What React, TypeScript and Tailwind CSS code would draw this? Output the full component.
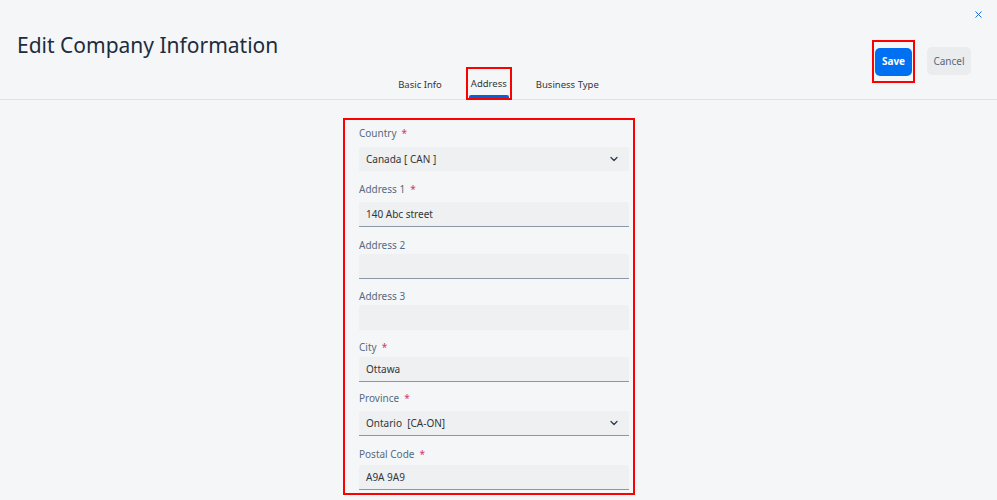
import { ChevronDown, X } from "lucide-react";

interface FieldProps {
    label: string;
    value?: string;
    required?: boolean;
    select?: boolean;
    underline?: boolean;
    labelClass: string;
    inputClass: string;
}

function Field({ label, value, required, select, underline = true, labelClass, inputClass }: FieldProps) {
    return (
        <div>
            <div className={`h-[14px] leading-[14px] text-[10px] text-[#556b82] ${labelClass}`}>
                {label}
                {required && <span className="text-[#d0366d] ml-[5px]">*</span>}
            </div>
            <div
                className={`flex items-center justify-between bg-[#eef0f2] pl-[7px] pr-[9px] text-[10px] text-[#32363a] rounded-t-[3px] ${
                    underline ? "border-b border-[#8b97a5]" : ""
                } ${inputClass}`}
            >
                <span className="whitespace-pre">{value}</span>
                {select && <ChevronDown size={12} strokeWidth={2.5} className="text-[#2c3e50]" />}
            </div>
        </div>
    );
}

export default function App() {
    return (
        <div
            className="w-[997px] h-[500px] bg-[#f5f6f7] overflow-hidden"
            style={{ fontFamily: '"Noto Sans", "Open Sans", sans-serif' }}
        >
            {/* Header */}
            <div className="grid grid-cols-[1fr_auto_1fr] h-[100px] border-b border-[#dfe1e3]">
                <div className="pl-[17px] pt-[31px]">
                    <h1 className="text-[21px] leading-[28px] text-[#1d2d3e]">Edit Company Information</h1>
                </div>

                {/* Tabs */}
                <div className="flex items-end gap-[21px] text-[9.5px] text-[#32363a]">
                    <div className="px-[3px] h-[31px] flex items-center pt-[3px]">Basic Info</div>
                    <div className="border-2 border-[#ff0000] h-[33px] flex flex-col justify-end px-[1px] mb-[-1px]">
                        <div className="flex-1 flex items-center justify-center px-[2px] pt-[4px]">Address</div>
                        <div className="h-[3px] bg-[#0064d9] rounded-t-[2px]" />
                    </div>
                    <div className="px-[3px] h-[31px] flex items-center pt-[3px]">Business Type</div>
                </div>

                {/* Actions */}
                <div className="flex flex-col items-end pr-[13px] pt-[8px]">
                    <button className="text-[#0064d9] h-[12px] w-[12px] flex items-center justify-center">
                        <X size={11} strokeWidth={2} />
                    </button>
                    <div className="flex items-center mt-[20px] mr-[13px]">
                        <div className="border-2 border-[#ff0000] px-[1px] py-[5px]">
                            <button className="bg-[#0070f2] text-white text-[10px] font-bold w-[37px] h-[28px] rounded-[5px]">
                                Save
                            </button>
                        </div>
                        <button className="ml-[12px] bg-[#eaecee] text-[#556b82] text-[10px] w-[44px] h-[28px] rounded-[5px]">
                            Cancel
                        </button>
                    </div>
                </div>
            </div>

            {/* Form */}
            <div className="ml-[343px] mt-[18px] w-[292px] border-2 border-[#ff0000] pl-[14px] pr-[4px] pb-[3px]">
                <Field label="Country" value="Canada [ CAN ]" required select underline={false} labelClass="mt-[6px]" inputClass="mt-[7px] h-[24px]" />
                <Field label="Address 1" value="140 Abc street" required labelClass="mt-[11px]" inputClass="mt-[6px] h-[25px]" />
                <Field label="Address 2" labelClass="mt-[11px]" inputClass="mt-[2px] h-[25px]" />
                <Field label="Address 3" underline={false} labelClass="mt-[10px]" inputClass="mt-[2px] h-[25px]" />
                <Field label="City" value="Ottawa" required labelClass="mt-[10px]" inputClass="mt-[3px] h-[25px]" />
                <Field label="Province" value="Ontario  [CA-ON]" required select labelClass="mt-[9px]" inputClass="mt-[6px] h-[25px]" />
                <Field label="Postal Code" value="A9A 9A9" required labelClass="mt-[11px]" inputClass="mt-[4px] h-[25px]" />
            </div>
        </div>
    );
}
